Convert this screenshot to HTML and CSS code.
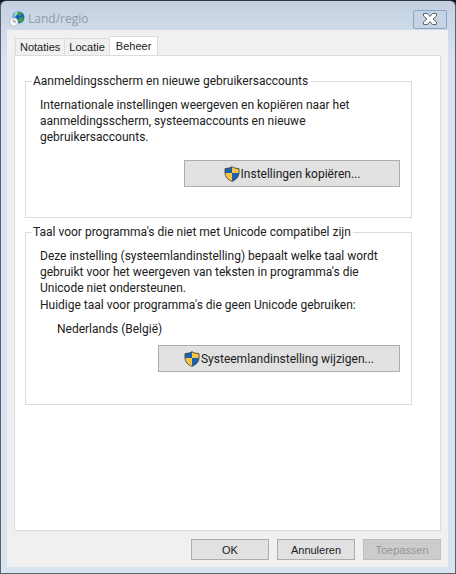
FILE: index.html
```html
<!DOCTYPE html>
<html lang="nl">
<head>
<meta charset="utf-8">
<meta name="viewport" content="width=device-width, initial-scale=1">
<title>Land/regio</title>
<link rel="stylesheet" href="styles.css">
</head>
<body>
<svg class="defs" aria-hidden="true">
  <symbol id="shield" viewBox="0 0 16 16">
    <path fill="#1b62ad" d="M8 .5 5.500 1.800 1 2.500V7H8z"/>
    <path fill="#f9c440" d="M8 .5 10.500 1.800 15 2.500V7.500H8z"/>
    <path fill="#f9c440" d="M1 7H8V15.500C4 13.500 1.300 11 1 7z"/>
    <path fill="#1b62ad" d="M15 7H8V15.500C12 13.500 14.700 11 15 7z"/>
    <path fill="none" stroke="#4d5358" d="M8 .7C6 2 4 2.400 1 2.600V7C1.200 11 4 13.700 8 15.400 12 13.700 14.800 11 15 7V2.600C12 2.400 10 2 8 .7z"/>
  </symbol>
</svg>
<main class="window">
  <header class="titlebar">
    <svg class="globe" viewBox="0 0 16 16" aria-hidden="true">
      <circle cx="9.500" cy="6.500" r="6" fill="#1764b4"/>
      <path fill="#6cc3ef" d="M4 5C5 2 8 .5 10 1L8 4 5 7z"/>
      <path fill="#3fa43c" d="M8 2 11 1 13 3 11 5 9 4zM10 7 14 6 14.500 9 12 12 10 10z"/>
      <path fill="#b9edb2" d="M6 2 8 1 8 3 6 5z"/>
      <circle cx="4.800" cy="11" r="4.300" fill="#f2f5f8" stroke="#a9b3bd" stroke-width=".8"/>
      <path fill="none" stroke="#8793a0" d="M4.800 8.500V11H7"/>
    </svg>
    <h1 class="title">Land/regio</h1>
    <button class="close" type="button" aria-label="Sluiten">
      <svg viewBox="0 0 16 14" aria-hidden="true"><path d="M1.500 1.500H5.500L8 4.500 10.500 1.500H14.500V4L11 7 14.500 10V12.500H10.500L8 9.500 5.500 12.500H1.500V10L5 7 1.500 4z"/></svg>
    </button>
  </header>
  <div class="client">
    <div class="tabs" role="tablist">
      <button class="tab" type="button" role="tab" aria-selected="false">Notaties</button>
      <button class="tab" type="button" role="tab" aria-selected="false">Locatie</button>
      <button class="tab active" type="button" role="tab" aria-selected="true">Beheer</button>
    </div>
    <section class="panel" role="tabpanel">
      <fieldset class="group">
        <legend>Aanmeldingsscherm en nieuwe gebruikersaccounts</legend>
        <p>Internationale instellingen weergeven en kopiëren naar het<br>aanmeldingsscherm, systeemaccounts en nieuwe<br>gebruikersaccounts.</p>
        <button class="action copy" type="button"><svg class="shield" aria-hidden="true"><use href="#shield"/></svg>Instellingen kopiëren...</button>
      </fieldset>
      <fieldset class="group locale">
        <legend>Taal voor programma's die niet met Unicode compatibel zijn</legend>
        <p>Deze instelling (systeemlandinstelling) bepaalt welke taal wordt<br>gebruikt voor het weergeven van teksten in programma's die<br>Unicode niet ondersteunen.</p>
        <p>Huidige taal voor programma's die geen Unicode gebruiken:</p>
        <p class="current">Nederlands (België)</p>
        <button class="action change" type="button"><svg class="shield" aria-hidden="true"><use href="#shield"/></svg>Systeemlandinstelling wijzigen...</button>
      </fieldset>
    </section>
    <footer class="footer">
      <button type="button">OK</button>
      <button type="button">Annuleren</button>
      <button type="button" disabled>Toepassen</button>
    </footer>
  </div>
</main>
</body>
</html>
```
FILE: styles.css
```css
* { box-sizing: border-box; }

body {
  margin: 0;
  background: #15151b;
  color: #202020;
  font: 12px/16px Roboto, "Open Sans", sans-serif;
}

button { margin: 0; color: inherit; font: inherit; }

.defs { position: absolute; width: 0; height: 0; }

.window {
  display: flex;
  flex-direction: column;
  min-height: 100vh;
  padding: 1px 7px 6px 6px;
  border: 1px solid #5c6068;
  border-top-color: #30343c;
  border-radius: 6px 6px 0 0;
  background: linear-gradient(#c3d0e0, #cfdbe9 30px, #d9e3f2 60px, #d6e4f0);
}

.titlebar {
  display: flex;
  align-items: center;
  gap: 3px;
  height: 28px;
  padding: 6px 1px 0 2px;
}

.globe { width: 16px; height: 16px; }

.title {
  flex: 1;
  margin: 0;
  color: #929ba5;
  font: 12px/16px "Open Sans", sans-serif;
}

.close {
  display: flex;
  align-items: center;
  justify-content: center;
  width: 34px;
  height: 19px;
  padding: 0;
  border: 1px solid #8ba6c4;
  border-radius: 2px;
  background: #c4d4e5;
}

.close svg { width: 16px; height: 14px; fill: #fff; stroke: #62676e; }

.client {
  display: flex;
  flex: 1;
  flex-direction: column;
  padding: 6px 7px 7px;
  background: #f0f0f0;
}

.tabs {
  display: flex;
  align-items: flex-end;
  height: 19px;
  padding-left: 1px;
  font: 11px/16px "Liberation Sans", Arial, sans-serif;
}

.tab {
  height: 17px;
  padding: 0 4px;
  border: 1px solid #dcdcdc;
  border-width: 1px 1px 0 0;
  background: #f0f0f0;
  white-space: nowrap;
}

.tab:first-child { border-left-width: 1px; }

.tab.active {
  height: 20px;
  margin-bottom: -1px;
  padding: 0 6px 2px;
  background: #fff;
}

.panel {
  display: flex;
  flex: 1;
  flex-direction: column;
  gap: 6px;
  padding: 17px 28px 17px 10px;
  border: 1px solid #dcdcdc;
  background: #fff;
}

.group {
  display: flex;
  flex-direction: column;
  align-items: flex-start;
  min-width: 0;
  height: 145px;
  margin: 0;
  padding: 8px 11px 0 14px;
  border: 1px solid #dcdcdc;
}

.group.locale { height: 181px; }

.group legend { margin-left: -8px; padding: 0 2px 0 1px; white-space: nowrap; }

.group p { margin: 0; white-space: nowrap; }

.locale p + p { margin-top: 1px; }

.locale .current { margin: 8px 0 0 17px; }

.action {
  display: flex;
  align-items: center;
  justify-content: center;
  align-self: flex-end;
  gap: 1px;
  height: 27px;
  margin-top: 15px;
  padding: 0 24px;
  border: 1px solid #adadad;
  background: #e1e1e1;
  white-space: nowrap;
}

.copy { min-width: 216px; }

.change { min-width: 242px; margin-top: 8px; }

.shield { width: 16px; height: 16px; }

.footer {
  display: flex;
  justify-content: flex-end;
  gap: 8px;
  padding-top: 8px;
}

.footer button {
  width: 78px;
  height: 21px;
  padding: 0;
  border: 1px solid #adadad;
  background: #e1e1e1;
  font: 11px/16px "Liberation Sans", Arial, sans-serif;
}

.footer button:disabled { border-color: #bfbfbf; background: #ccc; color: #969696; }
```
